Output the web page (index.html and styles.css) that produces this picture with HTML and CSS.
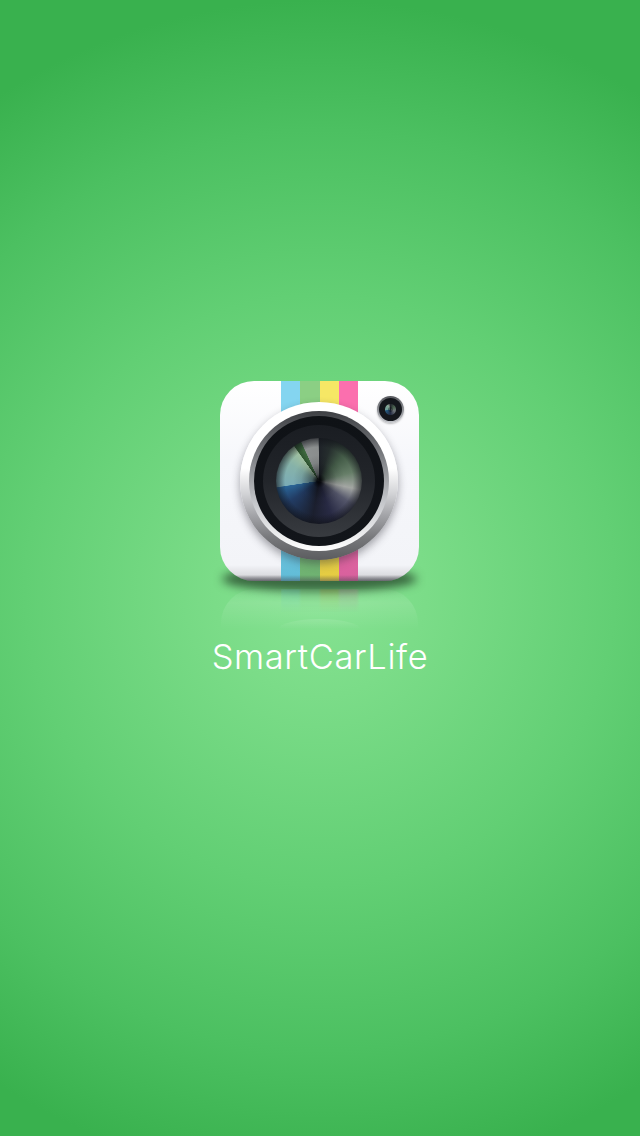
FILE: index.html
```html
<!DOCTYPE html>
<html lang="en">
<head>
<meta charset="utf-8">
<title>SmartCarLife</title>
<link rel="stylesheet" href="styles.css">
</head>
<body>
<main class="splash">
  <div class="icon">
    <div class="floor-shadow"></div>
    <div class="body">
      <div class="stripes">
        <span class="stripe blue"></span>
        <span class="stripe green"></span>
        <span class="stripe yellow"></span>
        <span class="stripe pink"></span>
      </div>
      <div class="shade"></div>
    </div>
    <div class="mini"><div class="mini-glass"></div></div>
    <div class="lens">
      <div class="bezel">
        <div class="barrel">
          <div class="ring">
            <div class="glass"></div>
          </div>
        </div>
      </div>
    </div>
  </div>
  <div class="reflection">
    <div class="ref-stripes">
      <span class="stripe blue"></span>
      <span class="stripe green"></span>
      <span class="stripe yellow"></span>
      <span class="stripe pink"></span>
    </div>
    <div class="ref-arc"></div>
  </div>
  <h1 class="title">SmartCarLife</h1>
</main>
</body>
</html>
```
FILE: styles.css
```css
html, body {
  margin: 0;
  height: 100%;
}
body {
  background: radial-gradient(circle 590px at 320px 590px, #87e393 0%, #7bdc88 18%, #62cf74 50%, #4cc061 78%, #39b14e 100%);
  background-color: #39b14e;
  overflow: hidden;
}
.splash {
  height: 1136px;
  box-sizing: border-box;
  padding-top: 381px;
  display: flex;
  flex-direction: column;
  align-items: center;
  font-family: "Inter", "Liberation Sans", sans-serif;
}
.icon {
  position: relative;
  width: 199px;
  height: 200px;
  margin-left: -1px;
}
.floor-shadow {
  position: absolute;
  left: 2px;
  right: 2px;
  bottom: -11px;
  height: 26px;
  border-radius: 50% / 50%;
  background: rgba(30, 60, 35, .72);
  filter: blur(5px);
}
.body {
  position: absolute;
  inset: 0;
  border-radius: 34px;
  overflow: hidden;
  background: linear-gradient(#ffffff 0%, #f6f7fb 40%, #f3f4f8 92%, #dcdce0 97%, #8a8a8e 100%);
}
.stripes {
  position: absolute;
  top: 0;
  left: 61px;
  display: flex;
  height: 200px;
}
.stripe {
  display: block;
  width: 19.25px;
}
.stripes .blue { background: linear-gradient(#84d5f0 0 50%, #60bbd6 100%); }
.stripes .green { background: linear-gradient(#8bcf84 0 50%, #6db070 100%); }
.stripes .yellow { background: linear-gradient(#f6e765 0 50%, #e4ca40 100%); }
.stripes .pink { background: linear-gradient(#fb6fae 0 50%, #d6609c 100%); }
.shade {
  position: absolute;
  left: 0;
  right: 0;
  bottom: 0;
  height: 6px;
  background: linear-gradient(rgba(70, 70, 80, 0), rgba(70, 70, 80, .5));
}
.mini {
  position: absolute;
  top: 15px;
  left: 157px;
  width: 27px;
  height: 27px;
  border-radius: 50%;
  box-sizing: border-box;
  padding: 2px;
  background: linear-gradient(#55575c, #c4c6cb);
  box-shadow: 0 1px 2px rgba(0, 0, 0, .25);
}
.mini-glass {
  width: 23px;
  height: 23px;
  border-radius: 50%;
  background:
    radial-gradient(circle, rgba(10, 14, 20, .4) 0 2px, transparent 3px),
    radial-gradient(circle, transparent 0 5px, #14171c 6px),
    conic-gradient(#22272c 0deg, #4d6652 60deg, #70767a 110deg, #222a42 180deg, #24587e 255deg, #6c9c98 265deg, #86a894 330deg, #7a7e7e 340deg, #22272c 360deg);
}
.lens {
  position: absolute;
  top: 21px;
  left: 20px;
  width: 158px;
  height: 158px;
  border-radius: 50%;
  box-sizing: border-box;
  padding: 9px;
  background: linear-gradient(#ffffff 0%, #ffffff 42%, #d2d3d6 58%, #a2a3a7 72%, #77787b 86%, #5b5c5f 100%);
  box-shadow: 0 4px 9px rgba(40, 40, 50, .42);
}
.bezel {
  width: 140px;
  height: 140px;
  box-sizing: border-box;
  padding: 5px;
  border-radius: 50%;
  background: linear-gradient(#3e4044 0%, #77797d 30%, #c4c6ca 65%, #ffffff 100%);
}
.barrel {
  width: 130px;
  height: 130px;
  box-sizing: border-box;
  padding: 9px;
  border-radius: 50%;
  background: linear-gradient(#0f1216, #12151a);
}
.ring {
  width: 112px;
  height: 112px;
  box-sizing: border-box;
  padding: 13px;
  border-radius: 50%;
  background: linear-gradient(#1a1d22 0%, #22252a 50%, #383b40 100%);
}
.glass {
  width: 86px;
  height: 86px;
  border-radius: 50%;
  background:
    radial-gradient(circle, rgba(5, 6, 10, .95) 0 2px, rgba(10, 12, 18, .5) 7px, rgba(10, 12, 18, .1) 18px, transparent 26px),
    radial-gradient(circle, transparent 0 34px, rgba(16, 18, 24, .65) 43px),
    conic-gradient(#1e2228 0deg, #252d2d 18deg, #445c48 45deg, #667e68 75deg, #a3a6a3 102deg, #55576b 125deg, #282a44 160deg, #1b1f2e 190deg, #223c64 235deg, #2a6496 261deg, #7bacb6 262deg, #86b2a9 300deg, #9fbf9f 324deg, #2f5530 325deg, #3f6a40 335deg, #8d9191 336deg, #8a8d8d 359deg, #1e2228 360deg);
}
.reflection {
  position: relative;
  width: 197px;
  height: 40px;
  margin-top: 8px;
  margin-left: -1px;
  border-radius: 34px 34px 0 0;
  background: linear-gradient(rgba(255, 255, 255, .03), rgba(255, 255, 255, .11) 35%, rgba(255, 255, 255, 0) 100%);
}
.ref-stripes {
  display: flex;
  height: 24px;
  margin-left: 60px;
  opacity: .2;
  filter: blur(1px);
  -webkit-mask-image: linear-gradient(#000, transparent);
  mask-image: linear-gradient(#000, transparent);
}
.ref-stripes .blue { background: #60bbd6; }
.ref-stripes .green { background: #6db070; }
.ref-stripes .yellow { background: #b98a20; }
.ref-stripes .pink { background: #d6609c; }
.ref-arc {
  position: absolute;
  left: 58px;
  right: 58px;
  bottom: 0;
  height: 10px;
  border-radius: 50% 50% 0 0 / 100% 100% 0 0;
  background: linear-gradient(rgba(255, 255, 255, .1), rgba(255, 255, 255, 0));
}
.title {
  margin: 8px 0 0;
  color: #fff;
  font-size: 34.5px;
  font-weight: 300;
  letter-spacing: .6px;
  line-height: 40px;
  text-align: center;
}
```
